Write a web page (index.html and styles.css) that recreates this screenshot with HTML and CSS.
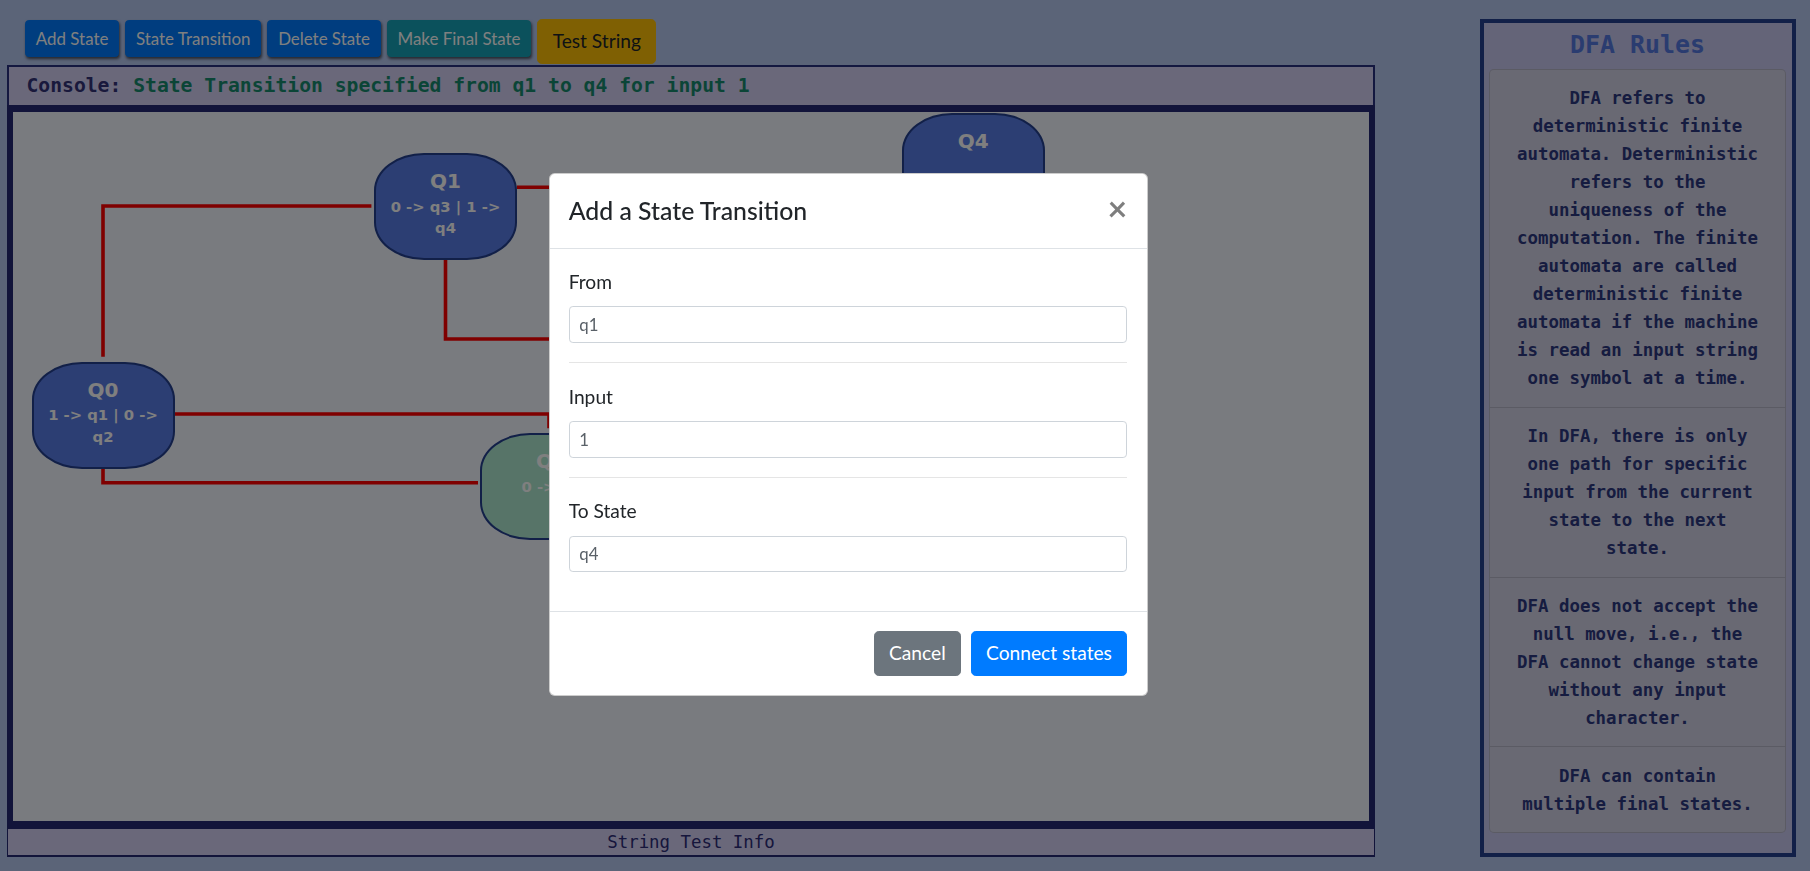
FILE: index.html
```html
<!DOCTYPE html>
<html lang="en">
<head>
<meta charset="utf-8">
<title>DFA Simulator</title>
<link rel="stylesheet" href="styles.css">
</head>
<body>
<div class="app">
  <main class="workspace">
    <div class="toolbar">
      <button class="btn btn-sm btn-primary">Add State</button>
      <button class="btn btn-sm btn-primary">State Transition</button>
      <button class="btn btn-sm btn-primary">Delete State</button>
      <button class="btn btn-sm btn-info">Make Final State</button>
      <button class="btn btn-warning">Test String</button>
    </div>
    <div class="console"><span class="console-label">Console:</span> <span class="console-msg">State Transition specified from q1 to q4 for input 1</span></div>
    <div class="canvas">
      <svg class="edges" width="1356" height="709" viewBox="0 0 1356 709">
        <polyline points="90,244.7 90,94 358.4,94"/>
        <polyline points="432.5,148 432.5,227 640,227"/>
        <polyline points="504,75.3 886,75.3"/>
        <polyline points="162,302 536,302 536,316.3"/>
        <polyline points="90,356 90,370.7 465,370.7"/>
      </svg>
      <div class="node" style="left:361px;top:41px">
        <div class="node-name">Q1</div>
        <div class="node-trans">0 -&gt; q3 | 1 -&gt; q4</div>
      </div>
      <div class="node" style="left:18.5px;top:249.7px">
        <div class="node-name">Q0</div>
        <div class="node-trans">1 -&gt; q1 | 0 -&gt; q2</div>
      </div>
      <div class="node" style="left:888.7px;top:1.3px">
        <div class="node-name">Q4</div>
      </div>
      <div class="node final" style="left:467px;top:321px">
        <div class="node-name">Q2</div>
        <div class="node-trans">0 -&gt; q4</div>
      </div>
    </div>
    <div class="test-info">String Test Info</div>
  </main>
  <aside class="rules">
    <h2 class="rules-title">DFA Rules</h2>
    <ul class="rules-list">
      <li>DFA refers to deterministic finite automata. Deterministic refers to the uniqueness of the computation. The finite automata are called deterministic finite automata if the machine is read an input string one symbol at a time.</li>
      <li>In DFA, there is only one path for specific input from the current state to the next state.</li>
      <li>DFA does not accept the null move, i.e., the DFA cannot change state without any input character.</li>
      <li>DFA can contain multiple final states.</li>
    </ul>
  </aside>
</div>

<div class="backdrop"></div>

<div class="modal">
  <div class="modal-header">
    <h5 class="modal-title">Add a State Transition</h5>
    <button class="close" aria-label="Close">&times;</button>
  </div>
  <div class="modal-body">
    <div class="form-group">
      <label class="label">From</label>
      <input class="input" type="text" value="q1">
    </div>
    <hr class="divider">
    <div class="form-group">
      <label class="label">Input</label>
      <input class="input" type="text" value="1">
    </div>
    <hr class="divider">
    <div class="form-group">
      <label class="label">To State</label>
      <input class="input" type="text" value="q4">
    </div>
  </div>
  <div class="modal-footer">
    <button class="btn btn-secondary">Cancel</button>
    <button class="btn btn-primary">Connect states</button>
  </div>
</div>
</body>
</html>
```

FILE: styles.css
```css
html {
  font-size: 19.2px;
}

body {
  margin: 0;
  background: #b6c8f0;
  font-family: "Lato", "Noto Sans", sans-serif;
  color: #212529;
  overflow: hidden;
}

.app {
  display: flex;
  align-items: flex-start;
  width: 1810px;
  height: 871px;
}

.workspace {
  width: 1368px;
  margin-left: 7px;
  flex: none;
}

/* toolbar */
.toolbar {
  display: flex;
  align-items: flex-start;
  gap: 6px;
  height: 65px;
  box-sizing: border-box;
  padding: 19px 0 0 18px;
}

.btn {
  font-family: "Lato", "Noto Sans", sans-serif;
  font-size: 19.2px;
  line-height: 28.8px;
  padding: 7.2px 14.4px;
  border: 1px solid transparent;
  border-radius: 4.8px;
  color: #fff;
  cursor: pointer;
}

.btn-sm {
  font-size: 16.9px;
  line-height: 25.2px;
  padding: 4.8px 9.8px;
  border-radius: 3.84px;
  margin-top: 1px;
  box-shadow: 1px 2px 3px rgba(0, 0, 0, 0.6);
}

.btn-primary {
  background: #007bff;
  border-color: #007bff;
}

.btn-info {
  background: #17a2b8;
  border-color: #17a2b8;
}

.btn-warning {
  background: #ffc107;
  border-color: #ffc107;
  color: #212529;
}

.btn-secondary {
  background: #6c757d;
  border-color: #6c757d;
}

/* console */
.console {
  height: 40px;
  box-sizing: border-box;
  border: 2px solid #283080;
  border-bottom: none;
  background: #d4d0f4;
  padding-left: 17.5px;
  font-family: "DejaVu Sans Mono", "Liberation Mono", monospace;
  font-weight: bold;
  font-size: 19.7px;
  line-height: 37px;
  white-space: pre;
}

.console-label {
  color: #323278;
}

.console-msg {
  color: #178a6e;
}

/* canvas */
.canvas {
  position: relative;
  height: 724px;
  box-sizing: border-box;
  border-style: solid;
  border-color: #242874;
  border-width: 7px 6px 8px 6px;
  background: #f2f6ff;
  overflow: hidden;
}

.edges {
  position: absolute;
  left: 0;
  top: 0;
}

.edges polyline {
  fill: none;
  stroke: #ff0000;
  stroke-width: 3.6;
  stroke-linejoin: miter;
}

.node {
  position: absolute;
  width: 143px;
  height: 107px;
  box-sizing: border-box;
  border: 2px solid #244090;
  border-radius: 35%;
  background: #587ce6;
  color: #fff;
  text-align: center;
  padding: 12px 9px 0;
  font-family: "DejaVu Sans", Verdana, sans-serif;
  font-weight: bold;
}

.node.final {
  background: #aee8d0;
}

.node-name {
  font-size: 20px;
  line-height: 28.8px;
}

.node-trans {
  font-size: 14.8px;
  line-height: 21.6px;
}

.test-info {
  height: 28px;
  box-sizing: border-box;
  border: 1px solid #242874;
  border-top: none;
  border-bottom-width: 2px;
  background: #d4d0f4;
  text-align: center;
  font-family: "DejaVu Sans Mono", "Liberation Mono", monospace;
  font-size: 17.4px;
  line-height: 26px;
  color: #2c2c78;
}

/* rules panel */
.rules {
  margin: 19px 14px 0 auto;
  width: 316px;
  flex: none;
  box-sizing: border-box;
  border: 4px solid #244090;
  background: #c8c8f0;
  padding: 0 6px 20px 5px;
}

.rules-title {
  margin: 0;
  padding: 4px 0 6px;
  text-align: center;
  font-family: "DejaVu Sans Mono", "Liberation Mono", monospace;
  font-size: 24.9px;
  line-height: 36px;
  font-weight: bold;
  color: #5478e0;
}

.rules-list {
  list-style: none;
  margin: 0;
  padding: 0;
}

.rules-list li {
  background: #d2d2e6;
  border: 1px solid rgba(0, 0, 0, 0.125);
  margin-bottom: -1px;
  padding: 14.4px 24px;
  text-align: center;
  font-family: "DejaVu Sans Mono", "Liberation Mono", monospace;
  font-weight: bold;
  font-size: 17.4px;
  line-height: 28px;
  color: #2c3880;
}

.rules-list li:first-child {
  border-radius: 4.8px 4.8px 0 0;
}

.rules-list li:last-child {
  border-radius: 0 0 4.8px 4.8px;
  margin-bottom: 0;
}

/* modal */
.backdrop {
  position: fixed;
  inset: 0;
  background: rgba(0, 0, 0, 0.5);
}

.modal {
  position: fixed;
  left: 548.5px;
  top: 172.5px;
  width: 599px;
  box-sizing: border-box;
  background: #fff;
  border: 1px solid rgba(0, 0, 0, 0.2);
  border-radius: 5.76px;
}

.modal-header {
  display: flex;
  align-items: flex-start;
  padding: 1rem;
  border-bottom: 1px solid #dee2e6;
}

.modal-title {
  margin: 0;
  font-size: 24.8px;
  line-height: 36px;
  font-weight: 500;
  color: #212529;
}

.close {
  margin: -1rem -1rem -1rem auto;
  padding: 17px 1rem 1rem;
  background: transparent;
  border: 0;
  font-family: "Lato", "Noto Sans", sans-serif;
  font-size: 34px;
  font-weight: 700;
  line-height: 1;
  color: #000;
  opacity: 0.5;
  text-shadow: 0 1px 0 #fff;
}

.modal-body {
  padding: 1rem;
}

.form-group {
  margin-bottom: 1rem;
}

.label {
  display: block;
  margin-bottom: 0.5rem;
  font-size: 19.2px;
  line-height: 28.8px;
  color: #212529;
}

.input {
  display: block;
  width: 100%;
  box-sizing: border-box;
  height: 36.8px;
  padding: 4.8px 9.6px;
  font-family: "Lato", "Noto Sans", sans-serif;
  font-size: 16.8px;
  line-height: 25.2px;
  color: #5a6168;
  background: #fff;
  border: 1px solid #ced4da;
  border-radius: 3.84px;
}

.divider {
  margin: 1rem 0;
  border: 0;
  border-top: 1px solid rgba(0, 0, 0, 0.1);
}

.modal-footer {
  display: flex;
  align-items: center;
  justify-content: flex-end;
  padding: 0.75rem;
  border-top: 1px solid #dee2e6;
}

.modal-footer .btn {
  margin: 0.25rem;
}
```
